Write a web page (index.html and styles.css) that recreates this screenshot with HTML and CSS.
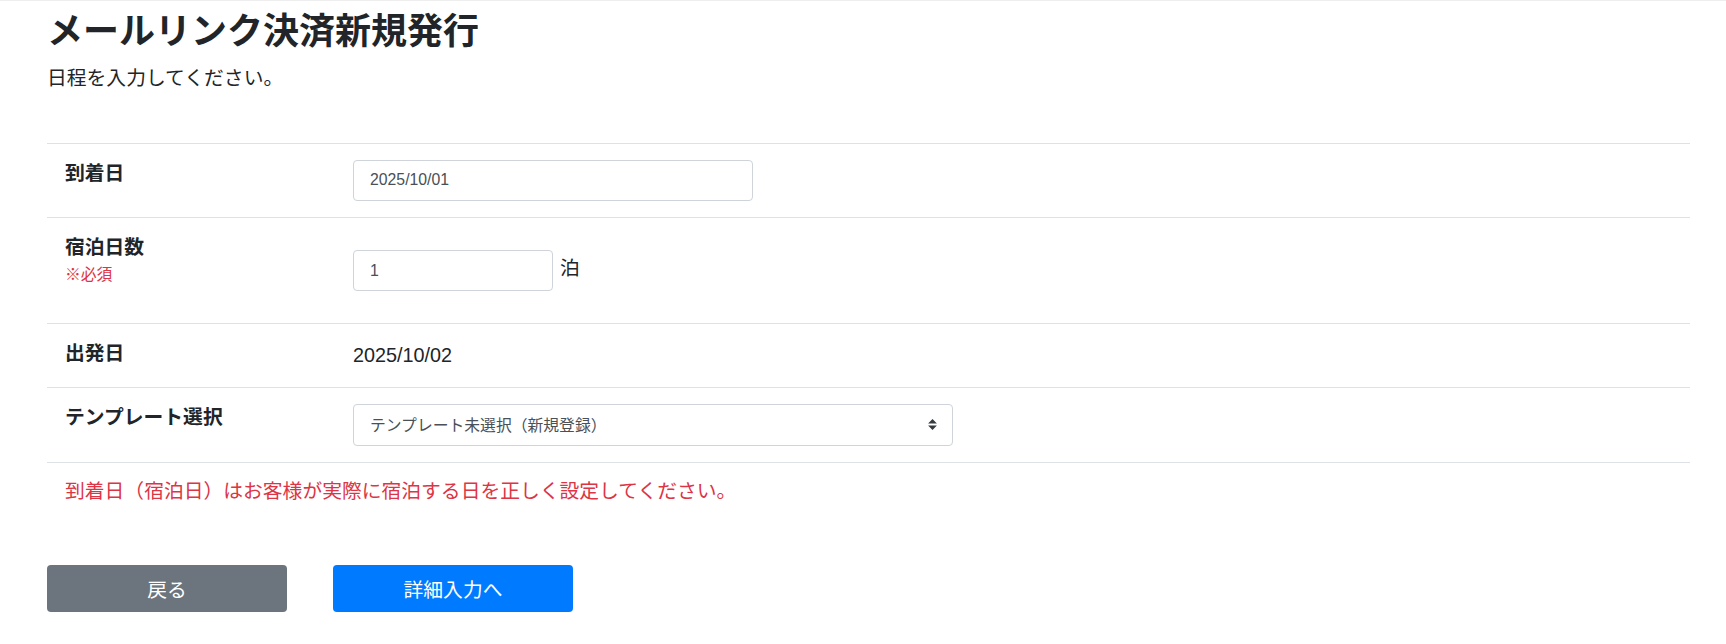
FILE: index.html
```html
<!DOCTYPE html>
<html lang="ja">

<head>
    <meta charset="UTF-8">
    <meta name="viewport" content="width=device-width, initial-scale=1.0">
    <title>メールリンク決済新規発行</title>
    <link rel="stylesheet" href="styles.css">
</head>

<body>

    <div class="container">
        <div class="page-header">
            <h1 class="page-title">メールリンク決済新規発行</h1>
            <p class="page-lead">日程を入力してください。</p>
        </div>

        <div class="form-table">
            <!-- 到着日 -->
            <div class="form-row">
                <div class="form-label">
                    <span class="label-text">到着日</span>
                </div>
                <div class="form-value">
                    <input type="text" class="form-input input-date" id="arrival" value="2025/10/01">
                </div>
            </div>

            <!-- 宿泊日数 -->
            <div class="form-row">
                <div class="form-label">
                    <span class="label-text">宿泊日数</span>
                    <p class="required">※必須</p>
                </div>
                <div class="form-value">
                    <input type="text" class="form-input input-nights" id="nights" value="1">
                    <span class="unit">泊</span>
                </div>
            </div>

            <!-- 出発日 -->
            <div class="form-row">
                <div class="form-label">
                    <span class="label-text">出発日</span>
                </div>
                <div class="form-value">
                    <span class="value-text" id="departure">2025/10/02</span>
                </div>
            </div>

            <!-- テンプレート選択 -->
            <div class="form-row">
                <div class="form-label">
                    <span class="label-text">テンプレート選択</span>
                </div>
                <div class="form-value">
                    <div class="select-wrap">
                        <select class="form-select" id="template">
                            <option value="">テンプレート未選択（新規登録）</option>
                        </select>
                        <svg class="select-arrow" viewBox="0 0 4 5" width="9" height="11">
                            <path d="M2 0L0 2h4zm0 5L0 3h4z" fill="#343a40" />
                        </svg>
                    </div>
                </div>
            </div>

            <div class="form-row note-row">
                <p class="note">到着日（宿泊日）はお客様が実際に宿泊する日を正しく設定してください。</p>
            </div>
        </div>

        <div class="actions">
            <button class="btn btn-back">戻る</button>
            <button class="btn btn-next">詳細入力へ</button>
        </div>
    </div>

</body>

</html>
```

FILE: styles.css
```css
body {
    font-family: "Liberation Sans", "Noto Sans CJK JP", sans-serif;
    font-size: 19.8px;
    line-height: 1.5;
    color: #212529;
    background-color: #fff;
    margin: 0;
    padding: 0;
    border-top: 1px solid #eeeeee;
}

.container {
    padding: 0 36px 0 47px;
}

.page-header {
    padding-top: 9px;
    margin-bottom: 49px;
}

.page-title {
    font-size: 36px;
    font-weight: bold;
    line-height: 1.2;
    margin: 0 0 11px;
}

.page-lead {
    margin: 0;
}

.form-row {
    display: flex;
    border-top: 1px solid #dee2e6;
}

.form-label {
    width: 306px;
    flex-shrink: 0;
    box-sizing: border-box;
    padding: 15px 18px 16px;
}

.label-text {
    display: block;
    font-weight: bold;
}

.required {
    font-size: 15.8px;
    color: #dc3545;
    margin: 0 0 21px;
}

.form-value {
    flex: 1;
    display: flex;
    align-items: center;
    padding: 16px 0;
}

.form-input,
.form-select {
    height: 41px;
    box-sizing: border-box;
    padding: 0 16px;
    font-family: inherit;
    font-size: 15.8px;
    color: #495057;
    background-color: #fff;
    border: 1px solid #ced4da;
    border-radius: 4px;
}

.input-date {
    width: 400px;
}

.input-nights {
    width: 200px;
}

.unit {
    margin-left: 7px;
    margin-top: -4px;
}

.value-text {
    line-height: 31px;
}

.select-wrap {
    position: relative;
    width: 600px;
}

.form-select {
    width: 100%;
    height: 42px;
    -webkit-appearance: none;
    appearance: none;
}

.select-arrow {
    position: absolute;
    right: 16px;
    top: 15px;
    pointer-events: none;
}

.note-row {
    padding: 14px 18px 0;
}

.note {
    color: #dc3545;
    margin: 0;
}

.actions {
    display: flex;
    gap: 46px;
    margin-top: 58px;
}

.btn {
    width: 240px;
    height: 47px;
    font-family: inherit;
    font-size: 19.8px;
    color: #fff;
    border: none;
    border-radius: 4px;
    cursor: pointer;
}

.btn-back {
    background-color: #6c757d;
}

.btn-next {
    background-color: #007bff;
}
```
